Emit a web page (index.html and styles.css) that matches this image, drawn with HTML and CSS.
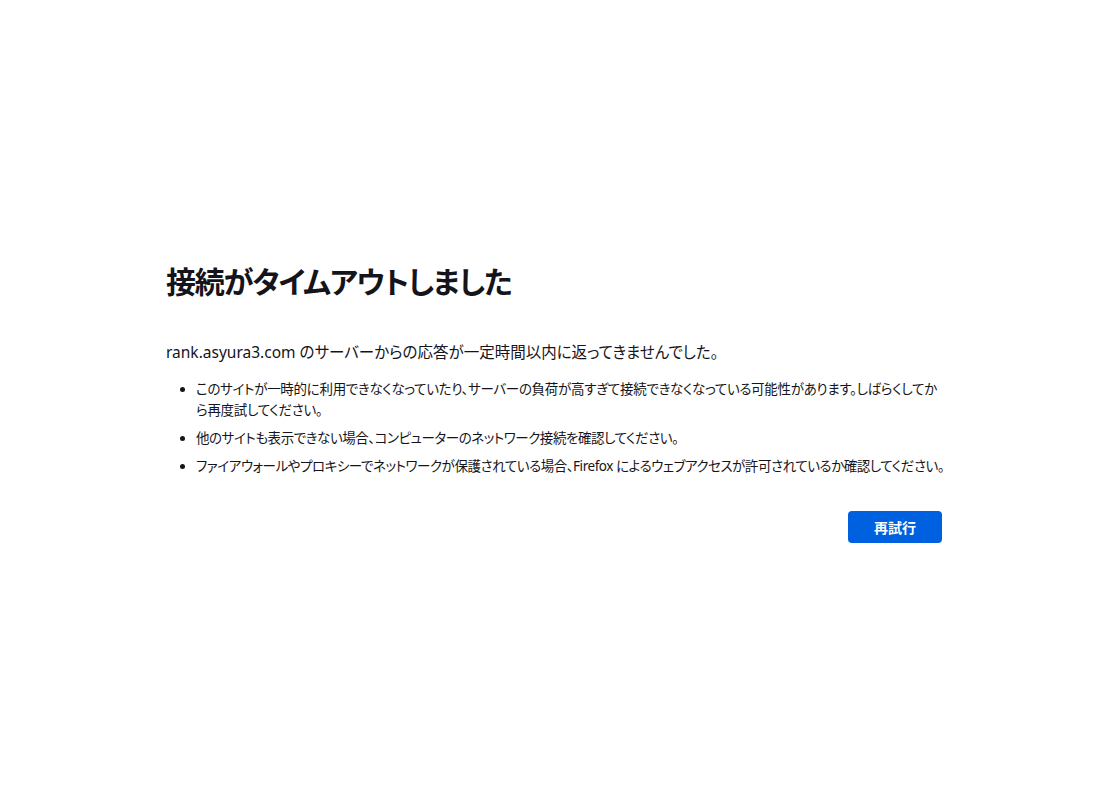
FILE: index.html
```html
<!DOCTYPE html>
<html lang="ja">

<head>
    <meta charset="UTF-8">
    <meta name="viewport" content="width=device-width, initial-scale=1.0">
    <title>接続がタイムアウトしました</title>

    <link rel="stylesheet" href="styles.css">
</head>

<body>
    <div class="container">
        <h1 class="title">接続がタイムアウトしました</h1>

        <p class="description">rank.asyura3.com のサーバーからの応答が一定時間以内に返ってきませんでした。</p>

        <ul class="tips">
            <li class="tipLoose">このサイトが一時的に利用できなくなっていたり、サーバーの負荷が高すぎて接続できなくなっている可能性があります。しばらくしてから再度試してください。</li>
            <li>他のサイトも表示できない場合、コンピューターのネットワーク接続を確認してください。</li>
            <li>ファイアウォールやプロキシーでネットワークが保護されている場合、Firefox によるウェブアクセスが許可されているか確認してください。</li>
        </ul>

        <!-- Retry button -->
        <div class="buttonRow">
            <button class="retryButton">再試行</button>
        </div>
    </div>
</body>

</html>
```

FILE: styles.css
```css
body {
    font-family: "Noto Sans", "Noto Sans CJK JP", sans-serif;
    font-feature-settings: "palt";
    background-color: #fff;
    color: #15141a;
    margin: 0;
    padding: 0;
}

.container {
    width: 780px;
    margin: 0 auto;
    padding-top: 262px;
}

.title {
    font-size: 30px;
    font-weight: 600;
    line-height: 40px;
    margin: 0 0 39px 0;
    letter-spacing: -1.2px;
}

.description {
    font-size: 15.5px;
    line-height: 22px;
    margin: 0 0 16px 0;
}

.tips {
    margin: 0;
    padding-left: 30px;
    font-size: 13.5px;
    line-height: 21px;
    letter-spacing: -0.45px;
}

.tips li {
    margin-bottom: 7px;
}

/* first tip wraps a little earlier, like the original */
.tips .tipLoose {
    letter-spacing: -0.3px;
}

.buttonRow {
    display: flex;
    justify-content: flex-end;
    margin-top: 34px;
    padding-right: 4px;
}

.retryButton {
    background-color: #0061e0;
    /* Firefox blue */
    color: #fff;
    font-family: inherit;
    font-size: 14px;
    font-weight: 700;
    width: 94px;
    height: 32px;
    border: none;
    border-radius: 4px;
    cursor: pointer;
}

.retryButton:hover {
    background-color: #0250bb;
}
```
